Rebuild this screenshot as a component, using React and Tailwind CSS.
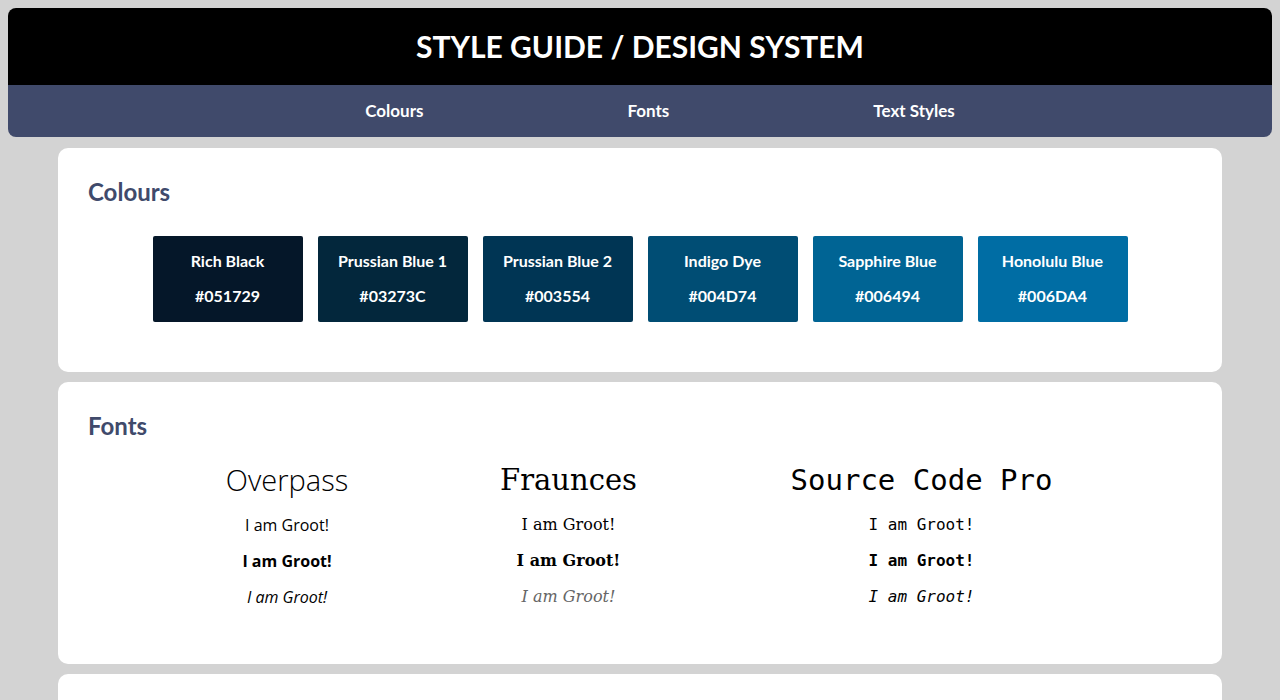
import React from 'react';

const swatches = [
  { name: 'Rich Black', hex: '#051729', bg: 'bg-[#051729]' },
  { name: 'Prussian Blue 1', hex: '#03273C', bg: 'bg-[#03273c]' },
  { name: 'Prussian Blue 2', hex: '#003554', bg: 'bg-[#003554]' },
  { name: 'Indigo Dye', hex: '#004D74', bg: 'bg-[#004d74]' },
  { name: 'Sapphire Blue', hex: '#006494', bg: 'bg-[#006494]' },
  { name: 'Honolulu Blue', hex: '#006DA4', bg: 'bg-[#006da4]' },
];

const fonts = [
  { title: 'Overpass', width: 'w-[125px]', family: "font-['Open_Sans',sans-serif]", head: 'font-light', italic: 'text-black' },
  { title: 'Fraunces', width: 'w-[126px]', family: "font-['DejaVu_Serif',serif]", head: 'font-normal', italic: 'text-[#666]' },
  { title: 'Source Code Pro', width: 'w-[268px]', family: "font-['DejaVu_Sans_Mono',monospace]", head: 'font-normal', italic: 'text-black' },
];

export default function App() {
  return (
    <div className="min-h-[700px] bg-[#d3d3d3] p-2 font-['Lato',sans-serif]">
      <header className="overflow-hidden rounded-lg">
        <div className="flex h-[77px] items-center justify-center bg-black">
          <h1 className="text-[30px] font-bold text-white">STYLE GUIDE / DESIGN SYSTEM</h1>
        </div>
        <nav className="flex h-[52px] items-center justify-center gap-[204px] bg-[#404a6b] pl-10 text-[17px] font-bold text-white">
          <a>Colours</a>
          <a>Fonts</a>
          <a>Text Styles</a>
        </nav>
      </header>

      <div className="mx-[50px] mt-[11px] flex flex-col gap-[10px]">
        <section className="h-[224px] rounded-[10px] bg-white px-[30px] pt-[28px]">
          <h2 className="text-2xl font-bold text-[#404a6b]">Colours</h2>
          <div className="mt-[28px] flex justify-center gap-[15px]">
            {swatches.map((s) => (
              <div
                key={s.name}
                className={`flex h-[86px] w-[150px] flex-col items-center justify-center gap-[13px] rounded-[2px] pb-[2px] text-base font-bold text-white ${s.bg}`}
              >
                <span className="leading-[22px]">{s.name}</span>
                <span className="leading-[22px]">{s.hex}</span>
              </div>
            ))}
          </div>
        </section>

        <section className="h-[282px] rounded-[10px] bg-white px-[30px] pt-[28px]">
          <h2 className="text-2xl font-bold text-[#404a6b]">Fonts</h2>
          <div className="mt-[18px] flex justify-center gap-[156px]">
            {fonts.map((f) => (
              <div key={f.title} className={`flex flex-col items-center whitespace-nowrap ${f.width} ${f.family}`}>
                <span className={`text-[29px] leading-[40px] text-black ${f.head}`}>{f.title}</span>
                <span className="mt-[7px] text-base leading-[36px] text-black">I am Groot!</span>
                <span className="text-base font-bold leading-[36px] text-black">I am Groot!</span>
                <span className={`text-base italic leading-[36px] ${f.italic}`}>I am Groot!</span>
              </div>
            ))}
          </div>
        </section>

        <section className="h-[60px] rounded-t-[10px] bg-white" />
      </div>
    </div>
  );
}
